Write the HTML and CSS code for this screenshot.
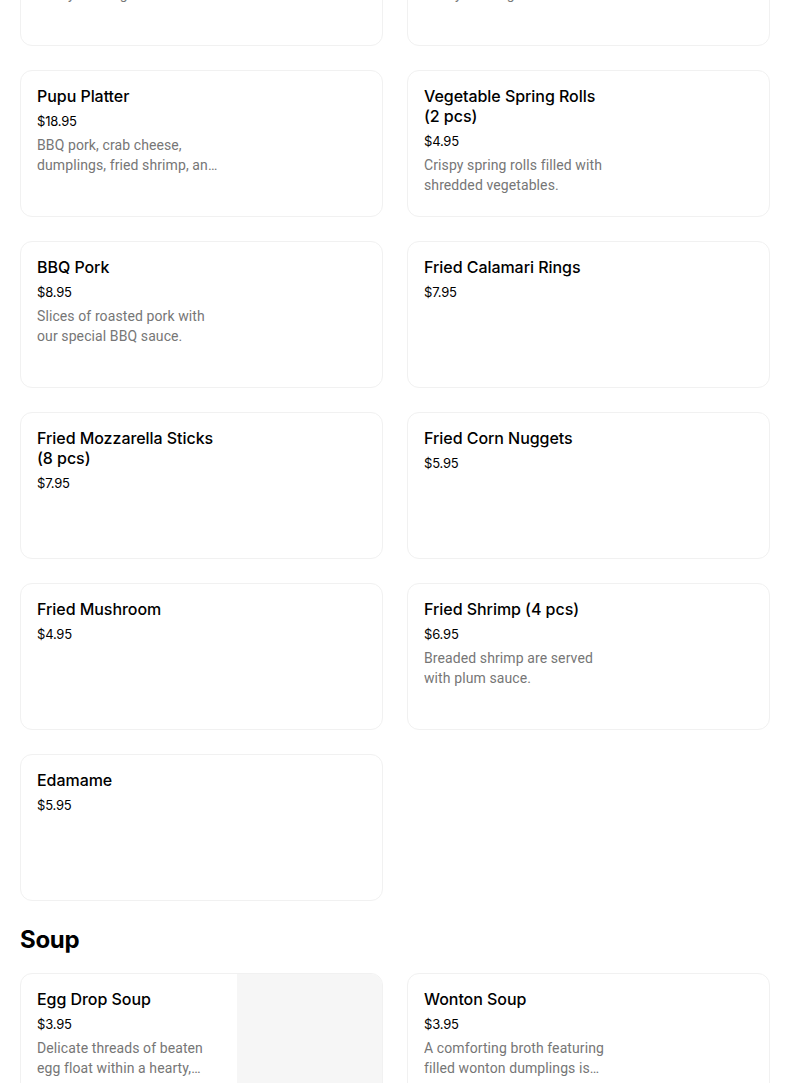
FILE: index.html
```html
<!DOCTYPE html>
<html lang="en">
<head>
<meta charset="utf-8">
<title>Menu</title>
<link rel="stylesheet" href="styles.css">
</head>
<body>
<main class="menu">
  <section class="section section-first">
    <div class="grid">
      <div class="card">
        <div class="info">
          <div class="title">Egg Roll (1 pc)</div>
          <div class="price">$1.95</div>
          <div class="desc">Cabbage, pork, carrots, celery and vegetables and served with sweet and sour sauce.</div>
        </div>
        <div class="thumb"></div>
      </div>
      <div class="card">
        <div class="info">
          <div class="title">Egg Rolls (2 pcs)</div>
          <div class="price">$3.75</div>
          <div class="desc">Cabbage, pork, carrots, celery and vegetables and served with sweet and sour sauce.</div>
        </div>
        <div class="thumb"></div>
      </div>
      <div class="card">
        <div class="info">
          <div class="title">Pupu Platter</div>
          <div class="price">$18.95</div>
          <div class="desc">BBQ pork, crab cheese, dumplings, fried shrimp, and chicken wings served with sauces.</div>
        </div>
        <div class="thumb"></div>
      </div>
      <div class="card">
        <div class="info">
          <div class="title">Vegetable Spring Rolls (2 pcs)</div>
          <div class="price">$4.95</div>
          <div class="desc">Crispy spring rolls filled with shredded vegetables.</div>
        </div>
        <div class="thumb"></div>
      </div>
      <div class="card">
        <div class="info">
          <div class="title">BBQ Pork</div>
          <div class="price">$8.95</div>
          <div class="desc">Slices of roasted pork with our special BBQ sauce.</div>
        </div>
        <div class="thumb"></div>
      </div>
      <div class="card">
        <div class="info">
          <div class="title">Fried Calamari Rings</div>
          <div class="price">$7.95</div>
        </div>
        <div class="thumb"></div>
      </div>
      <div class="card">
        <div class="info">
          <div class="title">Fried Mozzarella Sticks (8 pcs)</div>
          <div class="price">$7.95</div>
        </div>
        <div class="thumb"></div>
      </div>
      <div class="card">
        <div class="info">
          <div class="title">Fried Corn Nuggets</div>
          <div class="price">$5.95</div>
        </div>
        <div class="thumb"></div>
      </div>
      <div class="card">
        <div class="info">
          <div class="title">Fried Mushroom</div>
          <div class="price">$4.95</div>
        </div>
        <div class="thumb"></div>
      </div>
      <div class="card">
        <div class="info">
          <div class="title">Fried Shrimp (4 pcs)</div>
          <div class="price">$6.95</div>
          <div class="desc">Breaded shrimp are served with plum sauce.</div>
        </div>
        <div class="thumb"></div>
      </div>
      <div class="card">
        <div class="info">
          <div class="title">Edamame</div>
          <div class="price">$5.95</div>
        </div>
        <div class="thumb"></div>
      </div>
    </div>
  </section>

  <section class="section">
    <h2 class="section-title">Soup</h2>
    <div class="grid">
      <div class="card">
        <div class="info">
          <div class="title">Egg Drop Soup</div>
          <div class="price">$3.95</div>
          <div class="desc">Delicate threads of beaten egg float within a hearty, savory chicken broth.</div>
        </div>
        <div class="thumb thumb-placeholder"></div>
      </div>
      <div class="card">
        <div class="info">
          <div class="title">Wonton Soup</div>
          <div class="price">$3.95</div>
          <div class="desc">A comforting broth featuring filled wonton dumplings is served hot.</div>
        </div>
        <div class="thumb"></div>
      </div>
    </div>
  </section>
</main>
</body>
</html>
```

FILE: styles.css
```css
html, body {
  margin: 0;
  padding: 0;
  background: #ffffff;
  overflow: hidden;
}

body {
  font-family: Inter, "Noto Sans", "Liberation Sans", sans-serif;
  color: #000000;
}

.menu {
  width: 750px;
  padding: 0 20px;
}

.section-first {
  margin-top: -101px;
}

.section-title {
  margin: 23px 0 17px;
  font-size: 24px;
  line-height: 32px;
  font-weight: 700;
  letter-spacing: -0.3px;
}

.grid {
  display: grid;
  grid-template-columns: 363px 363px;
  column-gap: 24px;
  row-gap: 24px;
}

.card {
  box-sizing: border-box;
  height: 147px;
  display: flex;
  border: 1px solid #f1f1f1;
  border-radius: 12px;
  overflow: hidden;
  background: #ffffff;
}

.info {
  flex: 1;
  min-width: 0;
  padding: 15px 16px 16px;
}

.thumb {
  width: 145px;
  flex: none;
}

.thumb-placeholder {
  background: #f6f6f6;
}

.title {
  font-size: 16px;
  line-height: 20px;
  font-weight: 500;
  color: #000000;
  letter-spacing: -0.05px;
}

.price {
  margin-top: 5px;
  font-size: 13px;
  line-height: 20px;
  color: #000000;
  letter-spacing: -0.2px;
}

.desc {
  margin-top: 4px;
  font-family: Roboto, Inter, "Liberation Sans", sans-serif;
  font-size: 14px;
  line-height: 20px;
  color: #767676;
  letter-spacing: 0.1px;
  display: -webkit-box;
  -webkit-line-clamp: 2;
  -webkit-box-orient: vertical;
  overflow: hidden;
}
```
